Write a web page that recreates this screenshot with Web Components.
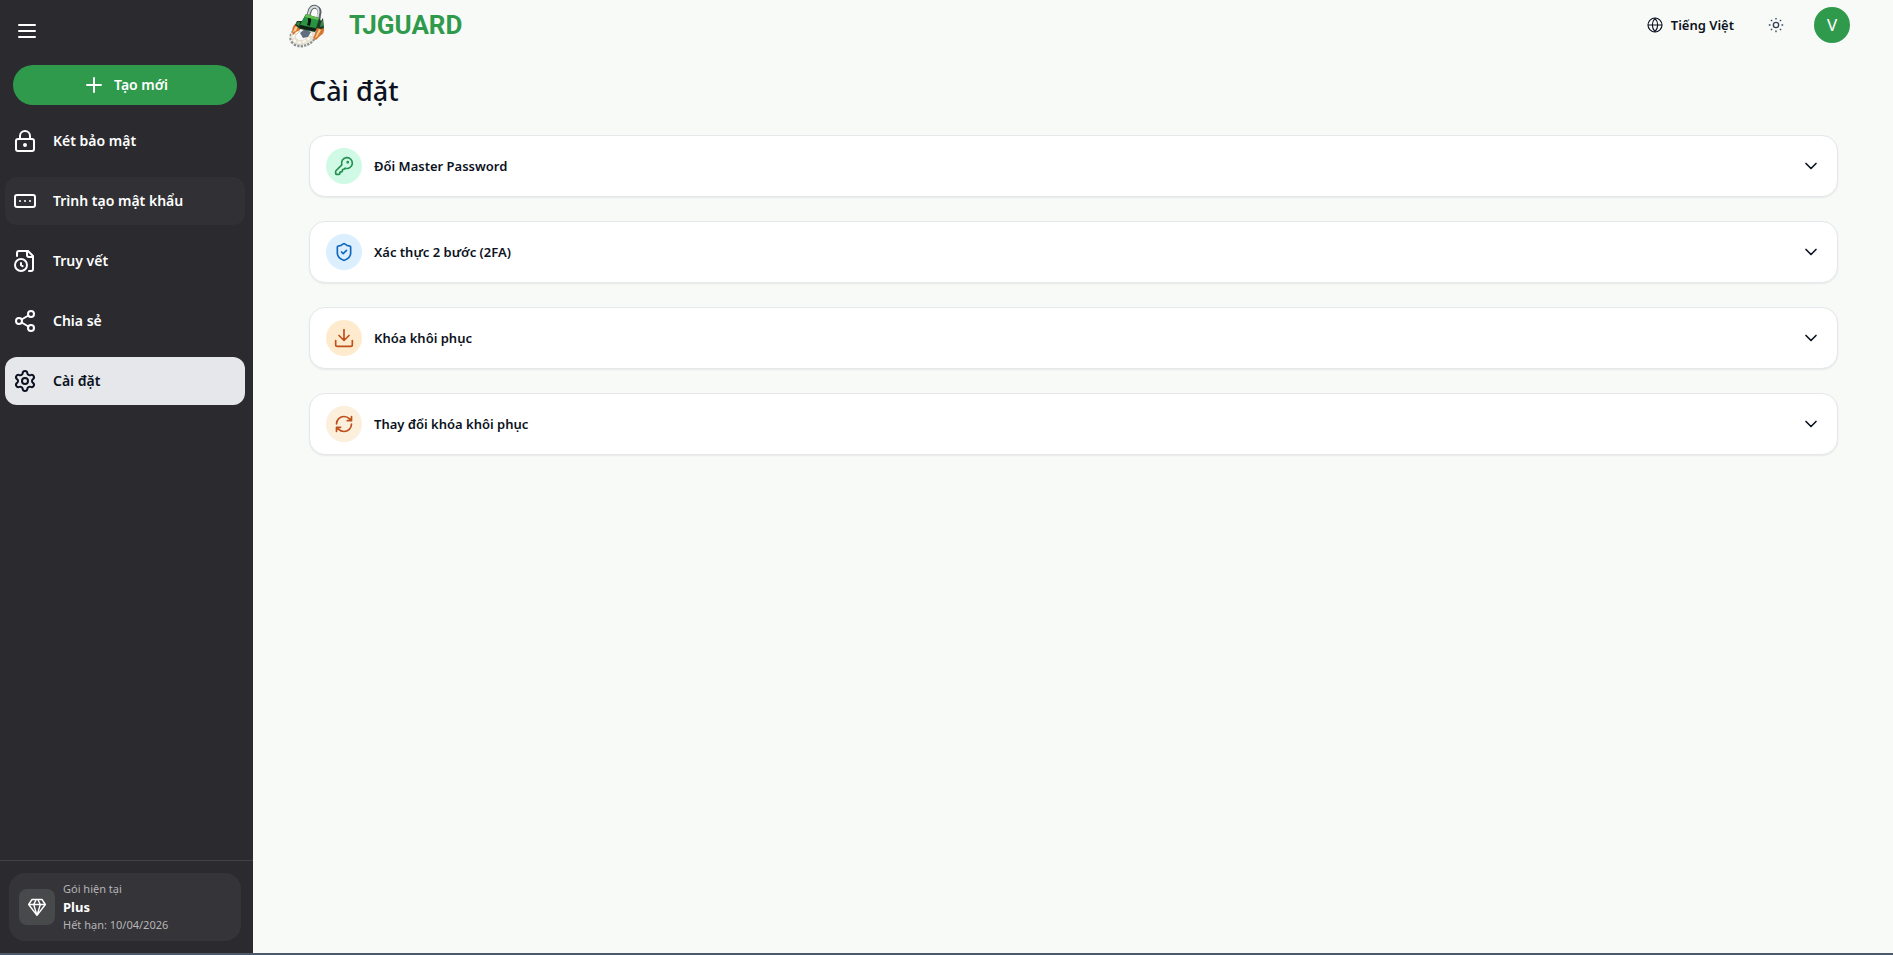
<!DOCTYPE html>
<html lang="vi">
<head>
<meta charset="utf-8">
<title>TJGUARD</title>
<style>
  html, body { margin: 0; }
  body { font-family: "Noto Sans", "Open Sans", sans-serif; font-size: 14px; line-height: 20px; color: #0c1222; background: #f8faf7; }
</style>
</head>
<body>
<tj-app></tj-app>

<template id="tpl-app">
  <style>
    :host { display: grid; grid-template-columns: 253px 1fr; min-height: 100vh; box-sizing: border-box; border-bottom: 2px solid #4c586b; }
    .content { min-width: 0; }
    main { padding: 24px 55px 24px 56px; }
    h1 { margin: 0; font-size: 27px; line-height: 34px; font-weight: 500; }
    .panels { display: grid; gap: 24px; margin-top: 27px; }
  </style>
  <tj-sidebar></tj-sidebar>
  <div class="content">
    <tj-header></tj-header>
    <main>
      <h1>Cài đặt</h1>
      <div class="panels">
        <tj-panel icon="key" tone="green">Đổi Master Password</tj-panel>
        <tj-panel icon="shield" tone="blue">Xác thực 2 bước (2FA)</tj-panel>
        <tj-panel icon="download" tone="orange">Khóa khôi phục</tj-panel>
        <tj-panel icon="refresh" tone="sand">Thay đổi khóa khôi phục</tj-panel>
      </div>
    </main>
  </div>
</template>

<template id="tpl-sidebar">
  <style>
    :host { display: flex; flex-direction: column; background: #2b2a2f; color: #fff; }
    button { font: inherit; color: inherit; border: 0; cursor: pointer; }
    .menu { display: flex; align-self: flex-start; margin: 19px 15px 22px; padding: 0; background: none; }
    .create { display: flex; align-items: center; justify-content: center; gap: 8px; height: 40px; margin: 0 16px 12px 13px; border-radius: 20px; background: #2f9a4c; font-weight: 600; }
    nav { display: grid; gap: 12px; padding: 0 8px 24px 5px; }
    .plan { margin-top: auto; padding: 12px 12px 12px 9px; border-top: 1px solid #434247; }
    .card { display: flex; align-items: center; gap: 8px; padding: 7px 10px; border-radius: 16px; background: #353439; }
    .gem { display: grid; place-items: center; width: 36px; height: 36px; border-radius: 8px; background: #48494b; }
    .card p { margin: 0; font-size: 11px; line-height: 18px; color: #b5b5b7; }
    .card p.name { color: #fff; font-weight: 700; font-size: 13px; }
  </style>
  <button class="menu" aria-label="Menu"><tj-icon name="menu" size="24"></tj-icon></button>
  <button class="create"><tj-icon name="plus" size="24"></tj-icon><span>Tạo mới</span></button>
  <nav>
    <tj-nav-item icon="lock">Két bảo mật</tj-nav-item>
    <tj-nav-item icon="password" hovered>Trình tạo mật khẩu</tj-nav-item>
    <tj-nav-item icon="history">Truy vết</tj-nav-item>
    <tj-nav-item icon="share">Chia sẻ</tj-nav-item>
    <tj-nav-item icon="gear" active>Cài đặt</tj-nav-item>
  </nav>
  <div class="plan">
    <div class="card">
      <div class="gem"><tj-icon name="gem" size="20"></tj-icon></div>
      <div><p>Gói hiện tại</p><p class="name">Plus</p><p>Hết hạn: 10/04/2026</p></div>
    </div>
  </div>
</template>

<template id="tpl-nav-item">
  <style>
    :host { display: block; }
    a { display: flex; align-items: center; gap: 16px; height: 48px; padding: 0 8px; border-radius: 12px; color: #fff; text-decoration: none; font-weight: 600; }
    :host([hovered]) a { background: #313035; }
    :host([active]) a { background: #e5e7eb; color: #0c1222; }
  </style>
  <a href="#"><tj-icon size="24"></tj-icon><span><slot></slot></span></a>
</template>

<template id="tpl-header">
  <style>
    :host { display: flex; align-items: center; height: 50px; padding: 0 43px 0 35px; }
    .brand { display: flex; align-items: center; gap: 21px; color: #2f9a4c; text-decoration: none; font: 700 26px/32px Roboto, sans-serif; }
    .tools { display: flex; align-items: center; margin-left: auto; }
    button { display: flex; align-items: center; font: inherit; color: inherit; border: 0; background: none; padding: 0; cursor: pointer; }
    .lang { gap: 8px; font-size: 13px; font-weight: 600; }
    .theme { padding: 0 30px 0 34px; color: #334155; }
    .avatar { justify-content: center; width: 36px; height: 36px; border-radius: 50%; background: #2f9a4c; color: #fff; font-size: 17px; }
    svg { display: block; }
  </style>
  <a class="brand" href="#">
    <svg width="40" height="48" viewBox="0 0 40 48" aria-hidden="true">
      <ellipse cx="15" cy="35" rx="11" ry="8" transform="rotate(-20 15 35)" fill="none" stroke="#8b9291" stroke-width="6" stroke-dasharray="2 1"/>
      <ellipse cx="15" cy="34" rx="10" ry="7" transform="rotate(-20 15 34)" fill="none" stroke="#e6e0d2" stroke-width="5"/>
      <ellipse cx="14" cy="35" rx="9" ry="6" transform="rotate(-20 14 35)" fill="none" stroke="#fffaf0" stroke-width="2" stroke-dasharray="3 2"/>
      <path d="M12 32l5-4 6 3-3 5-5 1z" fill="#5f6e80"/>
      <path d="M6 24Q9 21 12 24L12 29L8 31L5 34Q3 29 6 24Z" fill="#d4762f"/>
      <path d="M7 26l3-1-2 5-3 1z" fill="#f9cd92"/>
      <path d="M28 26L36 27Q37 32 32 35L28 39L25 37L28 31Z" fill="#d4762f"/>
      <path d="M31 28l2 1-4 7-2 1z" fill="#f9cd92"/>
      <path d="M20 16L22 9Q24 5 28 6Q33 8 31 14L30 21" fill="none" stroke="#596166" stroke-width="4"/>
      <path d="M20 15L22 9Q24 5 28 6Q32 8 30 14L29 20" fill="none" stroke="#d5dadd" stroke-width="2"/>
      <path d="M7 24L9 20L14 20L18 13L31 17L33 20L35 17L36 27L33 28L29 27L27 31L12 28Z" fill="#193d23"/>
      <path d="M13 22L18 13L31 18L28 27L12 24Z" fill="#299442"/>
      <path d="M18 13l13 4-1 2-13-3z" fill="#62be4d"/>
      <path d="M33 21l2-2v6l-3 1zM8 23l2-2h2l-1 4z" fill="#3a8546"/>
      <path d="M12 24l16 4-1 2-15-3z" fill="#0f2117"/>
      <path d="M20 17q4 0 3 3l-1 5-3-1 1-3z" fill="#07150e"/>
    </svg>
    <span>TJGUARD</span>
  </a>
  <div class="tools">
    <button class="lang"><tj-icon name="globe" size="16"></tj-icon><span>Tiếng Việt</span></button>
    <button class="theme" aria-label="Giao diện"><tj-icon name="sun" size="16"></tj-icon></button>
    <button class="avatar">V</button>
  </div>
</template>

<template id="tpl-panel">
  <style>
    :host { display: block; }
    button { display: flex; align-items: center; gap: 12px; width: 100%; box-sizing: border-box; padding: 12px 16px; border: 1px solid #e5e7eb; border-radius: 16px; background: #fff; box-shadow: 0 1px 2px rgba(0,0,0,.07); font: inherit; font-size: 13px; font-weight: 600; color: inherit; text-align: left; cursor: pointer; }
    .badge { display: grid; place-items: center; width: 36px; height: 36px; border-radius: 50%; }
    .label { flex: 1; }
    :host([tone=green]) .badge { background: #d0fae5; color: #23904e; }
    :host([tone=blue]) .badge { background: #dbeffe; color: #1268bd; }
    :host([tone=orange]) .badge { background: #feebcd; color: #bd501b; }
    :host([tone=sand]) .badge { background: #fcefdc; color: #bd501b; }
  </style>
  <button aria-expanded="false"><span class="badge"><tj-icon size="20"></tj-icon></span><span class="label"><slot></slot></span><tj-icon name="chevron" size="20"></tj-icon></button>
</template>

<script>
  const ICONS = {
    menu: '<path d="M4 6h16M4 12h16M4 18h16"/>',
    plus: '<path d="M12 5v14M5 12h14"/>',
    lock: '<rect x="3" y="10" width="18" height="12" rx="2"/><path d="M7 10V7a5 5 0 0 1 10 0v3"/><circle cx="12" cy="16" r="1"/>',
    password: '<rect x="2" y="6" width="20" height="12" rx="2"/><path d="M7 12h.01M12 12h.01M17 12h.01"/>',
    history: '<path d="M16 22h2a2 2 0 0 0 2-2V7l-5-5H6a2 2 0 0 0-2 2v3"/><path d="M14 2v4a2 2 0 0 0 2 2h4"/><circle cx="8" cy="16" r="6"/><path d="M8 14v2.2l1.6 1"/>',
    share: '<circle cx="18" cy="5" r="3"/><circle cx="6" cy="12" r="3"/><circle cx="18" cy="19" r="3"/><path d="m8.6 13.5 6.8 4M15.4 6.5l-6.8 4"/>',
    gear: '<path d="M9.671 4.136a2.34 2.34 0 0 1 4.659 0 2.34 2.34 0 0 0 3.319 1.915 2.34 2.34 0 0 1 2.33 4.033 2.34 2.34 0 0 0 0 3.831 2.34 2.34 0 0 1-2.33 4.033 2.34 2.34 0 0 0-3.319 1.915 2.34 2.34 0 0 1-4.659 0 2.34 2.34 0 0 0-3.32-1.915 2.34 2.34 0 0 1-2.33-4.033 2.34 2.34 0 0 0 0-3.831A2.34 2.34 0 0 1 6.35 6.051a2.34 2.34 0 0 0 3.319-1.915"/><circle cx="12" cy="12" r="3"/>',
    gem: '<path stroke-width="1.7" d="M6 3h12l4 6-10 13L2 9zM2 9h20M11 3L8 9l4 13 4-13-3-6"/>',
    globe: '<g stroke-width="1.7"><circle cx="12" cy="12" r="10.500"/><path d="M12 2a14.5 14.5 0 0 0 0 20 14.5 14.5 0 0 0 0-20M2 12h20"/></g>',
    sun: '<circle cx="12" cy="12" r="4"/><path d="M12 2v1M12 21v1M2 12h1M21 12h1M5 5l.5.5M18.500 18.500l.5.5M5 19l.5-.5M18.500 5.500l.5-.5"/>',
    key: '<path d="M2.586 17.414A2 2 0 0 0 2 18.828V21a1 1 0 0 0 1 1h3a1 1 0 0 0 1-1v-1a1 1 0 0 1 1-1h1a1 1 0 0 0 1-1v-1a1 1 0 0 1 1-1h.172a2 2 0 0 0 1.414-.586l.814-.814a6.500 6.500 0 1 0-4-4z"/><circle cx="16.500" cy="7.500" r=".7"/>',
    shield: '<path d="M20 13c0 5-3.500 7.500-7.660 8.950a1 1 0 0 1-.67-.01C7.500 20.500 4 18 4 13V6a1 1 0 0 1 1-1c2 0 4.500-1.200 6.240-2.720a1.170 1.170 0 0 1 1.520 0C14.510 3.810 17 5 19 5a1 1 0 0 1 1 1z"/><path d="m9 12 2 2 4-4"/>',
    download: '<path d="M12 2v13M6 9l6 6 6-6M2 15v5a2 2 0 0 0 2 2h16a2 2 0 0 0 2-2v-5"/>',
    refresh: '<path d="M3 12a9 9 0 0 1 9-9 9.750 9.750 0 0 1 6.740 2.740L21 8M21 3v5h-5M21 12a9 9 0 0 1-9 9 9.750 9.750 0 0 1-6.740-2.740L3 16M8 16H3v5"/>',
    chevron: '<path d="m6 9 6 6 6-6"/>'
  };

  class TemplateElement extends HTMLElement {
    constructor() {
      super();
      this.attachShadow({ mode: 'open' }).append(document.getElementById(this.constructor.template).content.cloneNode(true));
    }
  }
  class Icon extends HTMLElement {
    static observedAttributes = ['name', 'size'];
    constructor() { super(); this.attachShadow({ mode: 'open' }); }
    connectedCallback() { this.render(); }
    attributeChangedCallback() { this.render(); }
    render() {
      const size = this.getAttribute('size') || 24;
      this.shadowRoot.innerHTML = `<style>:host{display:block;flex:none}svg{display:block}</style>
        <svg width="${size}" height="${size}" viewBox="0 0 24 24" fill="none" stroke="currentColor" stroke-width="2" stroke-linecap="round" stroke-linejoin="round" aria-hidden="true">${ICONS[this.getAttribute('name')] || ''}</svg>`;
    }
  }
  class IconHost extends TemplateElement {
    connectedCallback() { this.shadowRoot.querySelector('tj-icon').setAttribute('name', this.getAttribute('icon')); }
  }
  customElements.define('tj-icon', Icon);
  customElements.define('tj-nav-item', class extends IconHost { static template = 'tpl-nav-item'; });
  customElements.define('tj-panel', class extends IconHost { static template = 'tpl-panel'; });
  customElements.define('tj-header', class extends TemplateElement { static template = 'tpl-header'; });
  customElements.define('tj-sidebar', class extends TemplateElement { static template = 'tpl-sidebar'; });
  customElements.define('tj-app', class extends TemplateElement { static template = 'tpl-app'; });
</script>
</body>
</html>
